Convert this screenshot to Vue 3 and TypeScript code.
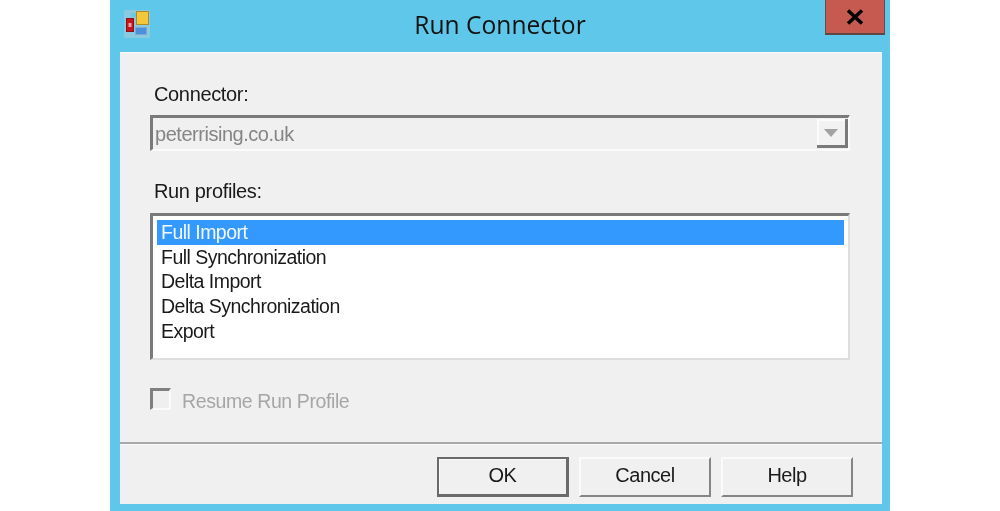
<script setup lang="ts">
const profiles: string[] = ['Full Import', 'Full Synchronization', 'Delta Import', 'Delta Synchronization', 'Export']
const selected = 0
</script>

<template>
  <div class="page">
    <div class="window">
      <header class="titlebar">
        <div class="app-icon">
          <svg width="26" height="28" viewBox="0 0 26 28">
            <rect x="0" y="0" width="26" height="28" rx="2" fill="#93cbdf" opacity="0.8" />
            <rect x="7" y="3" width="5" height="4" fill="#5fc8ea" opacity="0.8" />
            <rect x="2.5" y="8.5" width="7" height="13" fill="#c4161c" stroke="#8c1015" />
            <rect x="4.5" y="13" width="3" height="4" fill="#f0a0a0" />
            <rect x="12.5" y="1.5" width="12" height="13" fill="#f3c63c" stroke="#b08a2a" />
            <rect x="11.5" y="17.5" width="11" height="7" fill="#4c8fdc" stroke="#7fa8d0" />
          </svg>
        </div>
        <div class="title">Run Connector</div>
        <div class="controls">
          <button class="close" type="button" aria-label="Close">
            <svg width="18" height="16" viewBox="0 0 18 16">
              <path d="M2 1.5 L16 14.5 M16 1.5 L2 14.5" stroke="#000" stroke-width="3.6" fill="none" />
            </svg>
          </button>
        </div>
      </header>

      <main class="client">
        <div class="form">
          <div class="label connector-label">Connector:</div>
          <div class="combo">
            <span class="combo-text">peterrising.co.uk</span>
            <span class="combo-btn"><i class="arrow"></i></span>
          </div>

          <div class="label profiles-label">Run profiles:</div>
          <ul class="list">
            <li v-for="(p, i) in profiles" :key="p" class="row" :class="{ sel: i === selected }">{{ p }}</li>
          </ul>

          <label class="check">
            <span class="box"></span>
            <span class="check-text">Resume Run Profile</span>
          </label>
        </div>

        <div class="footer">
          <button class="btn default" type="button">OK</button>
          <button class="btn" type="button">Cancel</button>
          <button class="btn" type="button">Help</button>
        </div>
      </main>
    </div>
  </div>
</template>

<style>
html, body { margin: 0; background: #fff; }
</style>

<style scoped>
.page {
  width: 1000px;
  height: 511px;
  overflow: hidden;
  display: flex;
  justify-content: center;
  background: #fff;
  font-family: "Liberation Sans", Arial, sans-serif;
  color: #1a1a1a;
}
.window {
  width: 780px;
  height: 511px;
  box-sizing: border-box;
  padding: 0 8px 7px 10px;
  background: #5fc8ea;
  display: flex;
  flex-direction: column;
  filter: blur(0.6px);
}
.titlebar {
  height: 52px;
  flex: none;
  display: grid;
  grid-template-columns: 1fr auto 1fr;
  margin-left: -10px;
  margin-right: -8px;
}
.app-icon {
  padding: 10px 0 0 14px;
}
.title {
  font-family: "Open Sans", sans-serif;
  font-size: 24.6px;
  line-height: 50px;
  color: #111;
}
.controls {
  display: flex;
  justify-content: flex-end;
  align-items: flex-start;
  padding-right: 5px;
}
.close {
  width: 60px;
  height: 35px;
  padding: 0;
  border: 0;
  border-left: 1px solid #6e4a48;
  border-right: 1px solid #6e4a48;
  border-bottom: 2px solid #5e4644;
  background: #c75a50;
  display: flex;
  align-items: center;
  justify-content: center;
}
.client {
  flex: 1;
  background: #f0f0f0;
  border-top: 1px solid #fafafa;
  display: flex;
  flex-direction: column;
}
.form {
  flex: 1;
  padding-left: 30px;
  padding-right: 32px;
  display: flex;
  flex-direction: column;
  align-items: stretch;
  border-bottom: 2px solid #a8a8a8;
}
.label {
  font-size: 20px;
  line-height: 24px;
  padding-left: 4px;
  letter-spacing: -0.35px;
}
.connector-label { margin-top: 29px; }
.profiles-label { margin-top: 28px; }
.combo {
  margin-top: 9px;
  height: 36px;
  box-sizing: border-box;
  border-top: 3px solid #7a7a7a;
  border-left: 3px solid #7a7a7a;
  border-bottom: 2px solid #fbfbfb;
  border-right: 2px solid #fbfbfb;
  background: #f0f0f0;
  display: flex;
  position: relative;
}
.combo-text {
  flex: 1;
  font-size: 20px;
  line-height: 32px;
  padding-left: 2px;
  color: #858585;
  letter-spacing: -0.47px;
}
.combo-btn {
  width: 31px;
  height: 29px;
  margin-top: 1px;
  box-sizing: border-box;
  border-right: 3px solid #7a7a7a;
  border-bottom: 3px solid #7a7a7a;
  background: #f2f2f2;
  display: flex;
  align-items: center;
  justify-content: center;
  box-shadow: inset 2px 2px 0 #fbfbfb;
}
.arrow {
  width: 0;
  height: 0;
  border-left: 7px solid transparent;
  border-right: 7px solid transparent;
  border-top: 8px solid #a2a2a2;
  margin-top: 2px;
}
.list {
  list-style: none;
  margin: 10px 0 0;
  padding: 4px 4px 0 4px;
  height: 147px;
  box-sizing: border-box;
  background: #fff;
  border-top: 3px solid #7a7a7a;
  border-left: 3px solid #7a7a7a;
  border-bottom: 2px solid #dedede;
  border-right: 2px solid #dedede;
}
.row {
  font-size: 19.5px;
  line-height: 24.7px;
  height: 24.7px;
  padding-left: 4px;
  letter-spacing: -0.52px;
  white-space: nowrap;
}
.row.sel {
  background: #3399ff;
  color: #f4f9ff;
}
.check {
  margin-top: 28px;
  display: flex;
  align-items: center;
  gap: 11px;
  height: 22px;
}
.box {
  width: 21px;
  height: 22px;
  box-sizing: border-box;
  border-top: 3px solid #808080;
  border-left: 3px solid #808080;
  border-right: 2px solid #fafafa;
  border-bottom: 2px solid #fafafa;
  background: #efefef;
}
.check-text {
  font-size: 19.5px;
  line-height: 24px;
  color: #a6a6a6;
  letter-spacing: -0.4px;
  margin-top: 3px;
}
.footer {
  height: 60px;
  flex: none;
  box-sizing: border-box;
  padding: 12px 29px 0 0;
  display: flex;
  justify-content: flex-end;
  gap: 10px;
  border-top: 1px solid #fafafa;
}
.btn {
  width: 132px;
  height: 40px;
  box-sizing: border-box;
  padding: 0 0 3px;
  background: #f0f0f0;
  border-top: 2px solid #fafafa;
  border-left: 2px solid #fafafa;
  border-right: 2px solid #858585;
  border-bottom: 2px solid #858585;
  font-family: "Liberation Sans", Arial, sans-serif;
  font-size: 20px;
  letter-spacing: -0.5px;
  color: #1a1a1a;
}
.btn.default {
  border: 2px solid #6a6a6a;
  border-right-width: 3px;
  border-bottom-width: 3px;
  box-shadow: inset 1px 1px 0 #fafafa;
}
</style>
